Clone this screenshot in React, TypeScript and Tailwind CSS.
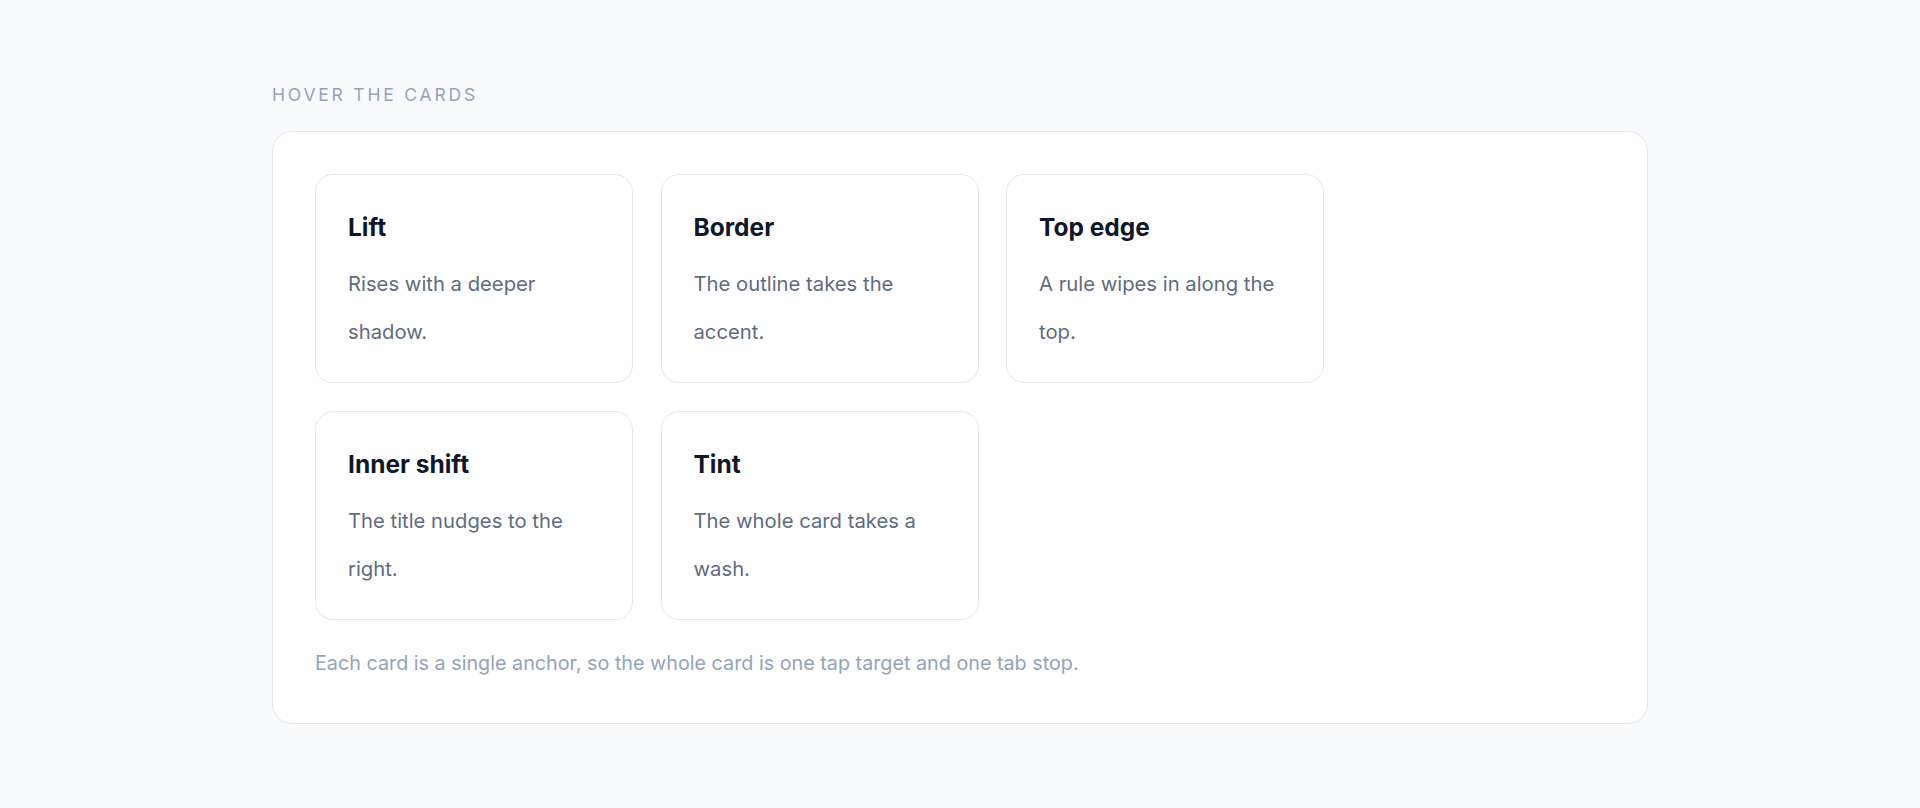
import React from 'react';

type Effect = 'lift' | 'border' | 'top' | 'shift' | 'tint';

interface HoverCard {
  title: string;
  body: string;
  effect: Effect;
}

const cards: HoverCard[] = [
  { title: 'Lift', body: 'Rises with a deeper shadow.', effect: 'lift' },
  { title: 'Border', body: 'The outline takes the accent.', effect: 'border' },
  { title: 'Top edge', body: 'A rule wipes in along the top.', effect: 'top' },
  { title: 'Inner shift', body: 'The title nudges to the right.', effect: 'shift' },
  { title: 'Tint', body: 'The whole card takes a wash.', effect: 'tint' },
];

// per-effect hover classes, written out in full so Tailwind picks them up
const effectClass: Record<Effect, string> = {
  lift: 'hover:-translate-y-1 hover:shadow-[0_14px_30px_rgba(15,23,42,0.10)]',
  border: 'hover:border-[#6366f1]',
  top: '',
  shift: '',
  tint: 'hover:bg-[#eef2ff]',
};

const Card: React.FC<{ card: HoverCard }> = ({ card }) => (
  <a
    href="#"
    className={`group relative block overflow-hidden rounded-[18px] border border-[#e2e8f0] bg-white px-8 py-[26px] no-underline transition-all duration-200 focus:outline-none focus-visible:ring-2 focus-visible:ring-[#6366f1] ${effectClass[card.effect]}`}
  >
    {/* wipe-in rule for the top edge variant */}
    {card.effect === 'top' && (
      <span className="absolute left-0 top-0 h-[3px] w-full origin-left scale-x-0 bg-[#6366f1] transition-transform duration-300 group-hover:scale-x-100" />
    )}
    <h3
      className={`text-[24.5px] font-bold leading-[52px] text-[#0f172a] transition-transform duration-200 ${
        card.effect === 'shift' ? 'group-hover:translate-x-1.5' : ''
      }`}
    >
      {card.title}
    </h3>
    <p className="mt-[7px] text-[20.25px] leading-[48px] text-[#5f6c80]">{card.body}</p>
  </a>
);

export default function App() {
  return (
    <div className="min-h-screen bg-[#f8fafc] font-['Inter','Noto_Sans',sans-serif] antialiased">
      <div className="mx-auto max-w-[1376px] pt-[83px] pb-[84px]">
        <div className="mb-6 text-[17.5px] uppercase leading-[24px] tracking-[0.16em] text-[#94a3b8]">
          Hover the cards
        </div>

        <section className="rounded-[20px] border border-[#e2e8f0] bg-white px-[42px] pt-[42px] pb-[44px]">
          <div className="grid grid-cols-[repeat(3,318px)] gap-[27.5px]">
            {cards.map((card) => (
              <Card key={card.title} card={card} />
            ))}
          </div>

          <p className="mt-[27.5px] text-[19.75px] leading-[32px] text-[#94a3b8]">
            Each card is a single anchor, so the whole card is one tap target and one tab stop.
          </p>
        </section>
      </div>
    </div>
  );
}
